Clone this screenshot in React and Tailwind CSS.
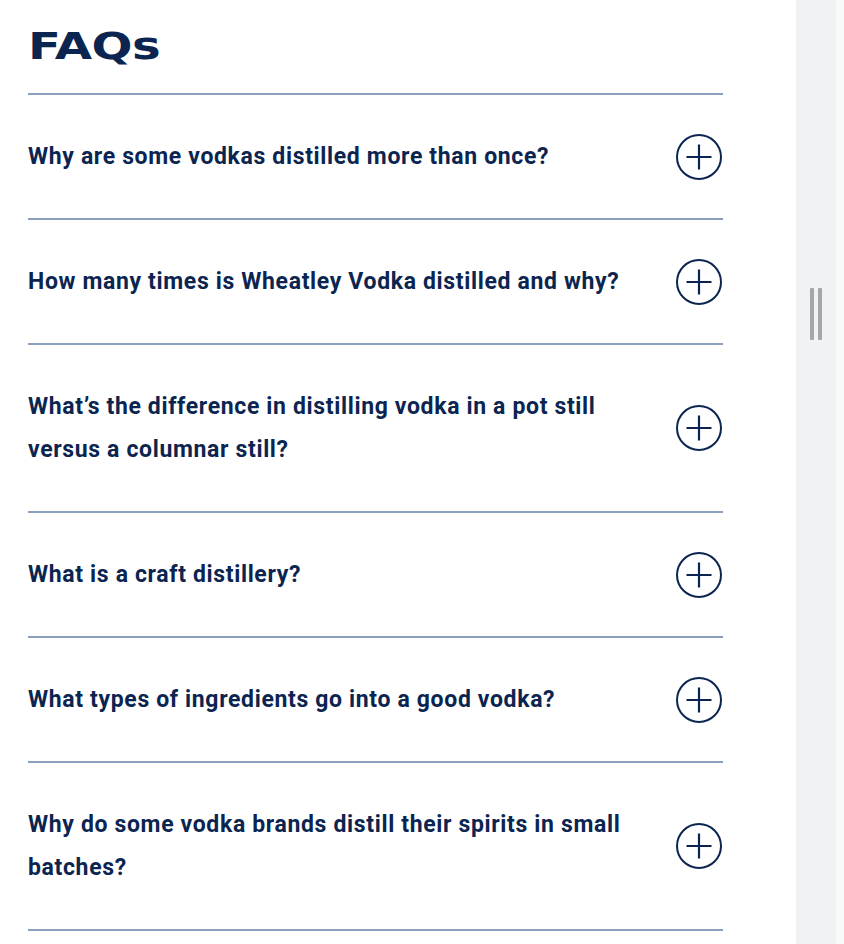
import React from "react";

const faqs = [
  "Why are some vodkas distilled more than once?",
  "How many times is Wheatley Vodka distilled and why?",
  "What’s the difference in distilling vodka in a pot still versus a columnar still?",
  "What is a craft distillery?",
  "What types of ingredients go into a good vodka?",
  "Why do some vodka brands distill their spirits in small batches?",
];

function PlusIcon() {
  return (
    <svg width="48" height="48" viewBox="0 0 48 48" fill="none" className="shrink-0">
      <circle cx="24" cy="24" r="22" stroke="#0b2550" strokeWidth="2" />
      <path d="M24 11.5V36.5M11.5 24H36.5" stroke="#0b2550" strokeWidth="2.2" />
    </svg>
  );
}

export default function App() {
  return (
    <div className="flex w-[844px] h-[944px] bg-white overflow-hidden">
      <div className="w-[796px] pl-[28px] pt-[22px]">
        <div className="w-[695px]">
          <h2
            className="inline-block origin-left scale-x-[1.27] text-[38px] leading-[48px] font-black text-[#0b2550] tracking-[-0.5px]"
            style={{ fontFamily: '"DejaVu Sans", sans-serif' }}
          >
            FAQs
          </h2>
          <div className="mt-[23px] border-t-2 border-[#8a9fbb]">
            {faqs.map((q) => (
              <div
                key={q}
                className="flex items-center justify-between border-b-2 border-[#8a9fbb]"
              >
                <p
                  className="w-[622px] py-[40px] text-[23px] leading-[43px] font-bold text-[#0b2550] tracking-[0.65px]"
                  style={{ fontFamily: 'Roboto, "Liberation Sans", sans-serif' }}
                >
                  {q}
                </p>
                <PlusIcon />
              </div>
            ))}
          </div>
        </div>
      </div>
      <div className="w-[40px] h-full bg-[#f1f2f3] flex items-start justify-center pt-[288px] gap-[4px]">
        <div className="w-[4px] h-[52px] bg-[#a6a6a6] rounded-[1px]" />
        <div className="w-[4px] h-[52px] bg-[#a6a6a6] rounded-[1px]" />
      </div>
      <div className="w-[8px] h-full bg-[#f8f9f9]" />
    </div>
  );
}
